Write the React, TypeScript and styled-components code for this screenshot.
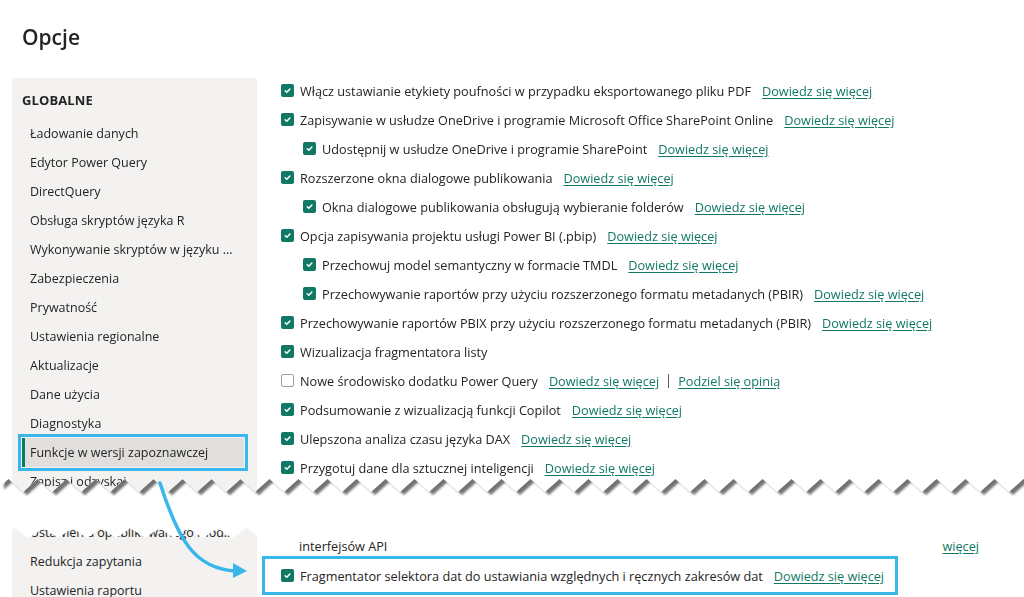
import styled, { createGlobalStyle } from "styled-components";

/*
 * OPCJE - PODGLĄD Z "ROZDARCIEM" MIĘDZY DWOMA FRAGMENTAMI
 */

const GREEN = "#117865";
const TEXT = "#252423";
const BLUE = "#3ab7ea";
const PAGE_W = 1024;

// zigzag points for the torn edge
const zigzag = (high: number, low: number, period: number, phase = 0) => {
    const pts: string[] = [];
    let i = 0;
    for (let x = -phase; x <= PAGE_W + period; x += period / 2) {
        pts.push(`${x}px ${i % 2 === 0 ? low : high}px`);
        i++;
    }
    return pts;
};

const topClip = () => {
    const pts = zigzag(479, 492, 29, 6).reverse();
    return `polygon(0 0, ${PAGE_W + 40}px 0, ${pts.join(", ")})`;
};

const bottomClip = () => {
    const pts = zigzag(10, 20, 29, 0);
    return `polygon(${pts.join(", ")}, ${PAGE_W + 40}px 100%, -20px 100%)`;
};

const GlobalStyle = createGlobalStyle`
  html, body { margin: 0; padding: 0; background: #fff; overflow: hidden; }
  body { font-family: "Segoe UI", "Open Sans", sans-serif; color: ${TEXT}; }
`;

const topItems = [
    "Ładowanie danych",
    "Edytor Power Query",
    "DirectQuery",
    "Obsługa skryptów języka R",
    "Wykonywanie skryptów w języku Python",
    "Zabezpieczenia",
    "Prywatność",
    "Ustawienia regionalne",
    "Aktualizacje",
    "Dane użycia",
    "Diagnostyka",
    "Funkcje w wersji zapoznawczej",
    "Zapisz i odzyskaj",
];

const bottomItems = [
    "Ustawienia opublikowanego modelu",
    "Redukcja zapytania",
    "Ustawienia raportu",
];

type Opt = { label: string; nested?: boolean; off?: boolean; link?: boolean; feedback?: boolean };

const options: Opt[] = [
    { label: "Włącz ustawianie etykiety poufności w przypadku eksportowanego pliku PDF", link: true },
    { label: "Zapisywanie w usłudze OneDrive i programie Microsoft Office SharePoint Online", link: true },
    { label: "Udostępnij w usłudze OneDrive i programie SharePoint", nested: true, link: true },
    { label: "Rozszerzone okna dialogowe publikowania", link: true },
    { label: "Okna dialogowe publikowania obsługują wybieranie folderów", nested: true, link: true },
    { label: "Opcja zapisywania projektu usługi Power BI (.pbip)", link: true },
    { label: "Przechowuj model semantyczny w formacie TMDL", nested: true, link: true },
    { label: "Przechowywanie raportów przy użyciu rozszerzonego formatu metadanych (PBIR)", nested: true, link: true },
    { label: "Przechowywanie raportów PBIX przy użyciu rozszerzonego formatu metadanych (PBIR)", link: true },
    { label: "Wizualizacja fragmentatora listy" },
    { label: "Nowe środowisko dodatku Power Query", off: true, link: true, feedback: true },
    { label: "Podsumowanie z wizualizacją funkcji Copilot", link: true },
    { label: "Ulepszona analiza czasu języka DAX", link: true },
    { label: "Przygotuj dane dla sztucznej inteligencji", link: true },
];

const Check = ({ off }: { off?: boolean }) => (
    <Box $off={off}>
        {!off && (
            <svg width="13" height="13" viewBox="0 0 13 13">
                <path d="M4.2 6.7 L5.8 8.2 L8.9 5" fill="none" stroke="#fff" strokeWidth="1.5" strokeLinecap="round" strokeLinejoin="round" />
            </svg>
        )}
    </Box>
);

const App = () => {
    return (
        <>
            <GlobalStyle />
            <Page>
                <TopShadow>
                    <TopPiece $clip={topClip()}>
                        <Title>Opcje</Title>
                        <Body>
                            <Sidebar>
                                <Heading>GLOBALNE</Heading>
                                {topItems.map((it) => (
                                    <NavItem key={it} $active={it === "Funkcje w wersji zapoznawczej"}>
                                        <span>{it}</span>
                                    </NavItem>
                                ))}
                            </Sidebar>
                            <Content>
                                {options.map((o) => (
                                    <Row key={o.label} $nested={o.nested}>
                                        <Check off={o.off} />
                                        <Label>{o.label}</Label>
                                        {o.link && <Link>Dowiedz się więcej</Link>}
                                        {o.feedback && (
                                            <>
                                                <Divider />
                                                <Link $tight>Podziel się opinią</Link>
                                            </>
                                        )}
                                    </Row>
                                ))}
                            </Content>
                        </Body>
                    </TopPiece>
                </TopShadow>

                <Gap />

                <BottomPiece $clip={bottomClip()}>
                    <Body>
                        <Sidebar $flat>
                            {bottomItems.map((it) => (
                                <NavItem key={it}>
                                    <span>{it}</span>
                                </NavItem>
                            ))}
                        </Sidebar>
                        <Content $pad>
                            <ContinuedRow>
                                <span>interfejsów API</span>
                                <Link $tight>więcej</Link>
                            </ContinuedRow>
                            <Highlight>
                                <Check />
                                <Label>Fragmentator selektora dat do ustawiania względnych i ręcznych zakresów dat</Label>
                                <Link>Dowiedz się więcej</Link>
                            </Highlight>
                        </Content>
                    </Body>
                </BottomPiece>

                <Arrow width="110" height="110" viewBox="0 0 110 110">
                    <path d="M10 8 C 28 64, 44 94, 86 96" fill="none" stroke={BLUE} strokeWidth="3.5" strokeLinecap="round" />
                    <polygon points="83,88 97,96 83,103" fill={BLUE} />
                </Arrow>
            </Page>
        </>
    );
};

const Page = styled.div`
  position: relative;
  width: ${PAGE_W}px;
  height: 597px;
  overflow: hidden;
  display: flex;
  flex-direction: column;
  background: #fff;
`;

/* ================= TORN PIECES ================== */
const TopShadow = styled.div`
  filter: drop-shadow(4px 3px 1px rgba(0, 0, 0, 0.55));
`;

const TopPiece = styled.div<{ $clip: string }>`
  height: 492px;
  overflow: hidden;
  background: #fff;
  clip-path: ${(p) => p.$clip};
`;

const Gap = styled.div`
  height: 26px;
  flex-shrink: 0;
`;

const BottomPiece = styled.div<{ $clip: string }>`
  flex: 1;
  overflow: hidden;
  background: #fff;
  clip-path: ${(p) => p.$clip};
`;

const Title = styled.h1`
  margin: 0;
  padding: 22px 22px 26px;
  font-size: 21px;
  line-height: 30px;
  font-weight: 600;
  color: ${TEXT};
`;

const Body = styled.div`
  display: flex;
  gap: 24px;
  padding-left: 12px;
  align-items: stretch;
  height: 100%;
`;

/* ================= SIDEBAR ================== */
const Sidebar = styled.nav<{ $flat?: boolean }>`
  width: 245px;
  flex-shrink: 0;
  background: #f3f2f1;
  border-radius: ${(p) => (p.$flat ? "0" : "4px 4px 0 0")};
  padding-top: ${(p) => (p.$flat ? "0" : "12px")};
  min-height: 420px;
`;

const Heading = styled.div`
  padding-left: 10px;
  font-size: 13px;
  line-height: 20px;
  font-weight: 700;
  margin-bottom: 9px;
  letter-spacing: 0.1px;
`;

const NavItem = styled.div<{ $active?: boolean }>`
  height: 29px;
  margin: 0 13px 0 10px;
  padding: 0 10px 0 5px;
  display: flex;
  align-items: center;
  border-left: 3px solid ${(p) => (p.$active ? GREEN : "transparent")};
  background: ${(p) => (p.$active ? "#e1dfdd" : "transparent")};
  outline: ${(p) => (p.$active ? `3px solid ${BLUE}` : "none")};
  outline-offset: 1px;
  font-size: 12.5px;
  white-space: nowrap;
  span {
    overflow: hidden;
    text-overflow: ellipsis;
  }
`;

/* ================= OPTIONS ================== */
const Content = styled.div<{ $pad?: boolean }>`
  flex: 1;
  margin-top: ${(p) => (p.$pad ? "0" : "-2px")};
  padding-top: ${(p) => (p.$pad ? "20px" : "0")};
  padding-right: 13px;
`;

const Row = styled.div<{ $nested?: boolean }>`
  height: 29px;
  display: flex;
  align-items: center;
  padding-left: ${(p) => (p.$nested ? "22px" : "0")};
  font-size: 12.7px;
  white-space: nowrap;
`;

const Box = styled.span<{ $off?: boolean }>`
  width: 13px;
  height: 13px;
  flex-shrink: 0;
  box-sizing: border-box;
  border-radius: 2px;
  display: flex;
  background: ${(p) => (p.$off ? "#fff" : GREEN)};
  border: ${(p) => (p.$off ? "1px solid #a19f9d" : "none")};
  margin-right: 6px;
`;

const Label = styled.span`
  color: ${TEXT};
`;

const Link = styled.a<{ $tight?: boolean }>`
  margin-left: ${(p) => (p.$tight ? "0" : "11px")};
  color: ${GREEN};
  text-decoration: underline;
  text-underline-offset: 2px;
  cursor: pointer;
`;

const Divider = styled.span`
  width: 1px;
  height: 14px;
  background: #605e5c;
  margin: 0 9px;
`;

const ContinuedRow = styled.div`
  display: flex;
  justify-content: space-between;
  padding: 0 32px 0 18px;
  font-size: 12.7px;
  line-height: 17px;
`;

const Highlight = styled.div`
  margin: 1px 0 0 -19px;
  width: 614px;
  height: 33px;
  padding-left: 16px;
  display: flex;
  align-items: center;
  border: 3px solid ${BLUE};
  font-size: 12.7px;
  white-space: nowrap;
`;

/* ================= OVERLAY ================== */
const Arrow = styled.svg`
  position: absolute;
  left: 150px;
  top: 475px;
  pointer-events: none;
`;

export default App;
